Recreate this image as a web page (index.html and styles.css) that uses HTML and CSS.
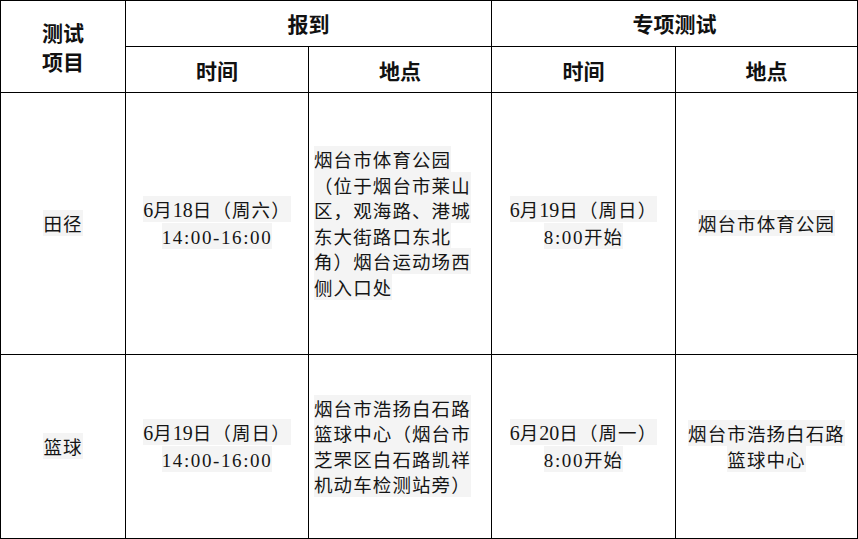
FILE: index.html
```html
<!DOCTYPE html>
<html lang="zh-CN">
<head>
<meta charset="utf-8">
<title>测试安排</title>
<link rel="stylesheet" href="styles.css">
</head>
<body>
<table class="sched">
  <colgroup>
    <col class="c-item">
    <col class="c-a">
    <col class="c-b">
    <col class="c-c">
    <col class="c-d">
  </colgroup>
  <thead>
    <tr class="h1">
      <th rowspan="2" class="item-h">测试<br>项目</th>
      <th colspan="2">报到</th>
      <th colspan="2">专项测试</th>
    </tr>
    <tr class="h2">
      <th>时间</th>
      <th>地点</th>
      <th>时间</th>
      <th>地点</th>
    </tr>
  </thead>
  <tbody>
    <tr class="r1">
      <td class="ctr"><span class="hl">田径</span></td>
      <td class="ctr"><span class="hl"><span class="lat">6</span>月<span class="lat">18</span>日（周六）</span><br><span class="hl"><span class="mono">14:00-16:00</span></span></td>
      <td class="place"><span class="hl">烟台市体育公园（位于烟台市莱山区，观海路、港城东大街路口东北角）烟台运动场西侧入口处</span></td>
      <td class="ctr"><span class="hl"><span class="lat">6</span>月<span class="lat">19</span>日（周日）</span><br><span class="hl"><span class="mono">8:00</span>开始</span></td>
      <td class="ctr"><span class="hl">烟台市体育公园</span></td>
    </tr>
    <tr class="r2">
      <td class="ctr"><span class="hl">篮球</span></td>
      <td class="ctr"><span class="hl"><span class="lat">6</span>月<span class="lat">19</span>日（周日）</span><br><span class="hl"><span class="mono">14:00-16:00</span></span></td>
      <td class="place"><span class="hl">烟台市浩扬白石路篮球中心（烟台市芝罘区白石路凯祥机动车检测站旁）</span></td>
      <td class="ctr"><span class="hl"><span class="lat">6</span>月<span class="lat">20</span>日（周一）</span><br><span class="hl"><span class="mono">8:00</span>开始</span></td>
      <td class="ctr"><span class="hl">烟台市浩扬白石路篮球中心</span></td>
    </tr>
  </tbody>
</table>
</body>
</html>
```
FILE: styles.css
```css
html, body {
  margin: 0;
  padding: 0;
  background: #ffffff;
}

body {
  font-family: "Noto Sans CJK SC", "Noto Sans", sans-serif;
  color: #151515;
}

.sched {
  border-collapse: collapse;
  table-layout: fixed;
  width: 857px;
}

.c-item { width: 125px; }
.c-a { width: 183px; }
.c-b { width: 183px; }
.c-c { width: 184px; }
.c-d { width: 182px; }

.sched th,
.sched td {
  border: 1px solid #000;
  padding: 0 5px;
  vertical-align: middle;
}

.sched th {
  font-size: 21px;
  font-weight: bold;
  text-align: center;
  line-height: 29px;
  color: #111;
}

.h1 th { height: 45px; }
.h2 th { height: 43px; padding-top: 2px; }

.item-h {
  line-height: 29px;
}

.sched td {
  font-size: 18.5px;
  letter-spacing: 1.1px;
  line-height: 25.5px;
}

.r1 td { height: 261px; }
.r2 td { height: 183px; }

.ctr { text-align: center; }

.sched td.place {
  text-align: left;
  padding-left: 5px;
  padding-right: 16px;
}

.hl {
  background: #f4f4f4;
}

.lat {
  font-family: "Liberation Serif", serif;
  font-size: 20px;
  letter-spacing: 0;
}

.mono {
  font-family: "Liberation Serif", serif;
  font-size: 19px;
  letter-spacing: 1.6px;
}
```
